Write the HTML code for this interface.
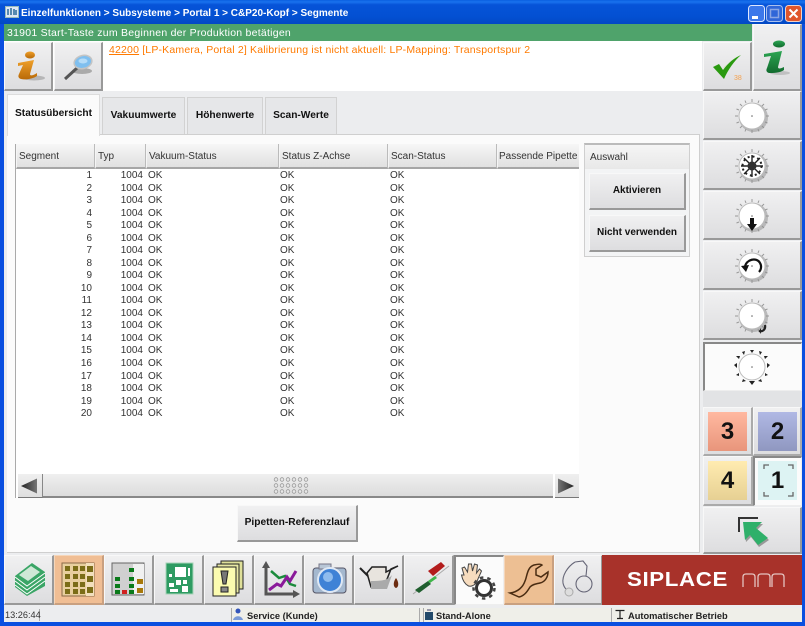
<!DOCTYPE html>
<html><head><meta charset="utf-8"><style>
*{box-sizing:border-box}
html,body{margin:0;padding:0;width:805px;height:626px;overflow:hidden;background:#ECEDEF}
body{font-family:"Liberation Sans",sans-serif;font-size:10px;color:#222}
#w{position:absolute;left:0;top:0;width:805px;height:626px;overflow:hidden;filter:blur(.3px);background:#ECEDEF}
.a{position:absolute}
.t{position:absolute;white-space:nowrap}
.btn{position:absolute;background:linear-gradient(#f0f0f1,#dddddf);border-top:1px solid #f8f8f8;border-left:1px solid #f8f8f8;border-right:2px solid #999;border-bottom:2px solid #999}
.act{background:#fbfbfb;border-top:2px solid #888;border-left:2px solid #888;border-right:1px solid #eee;border-bottom:1px solid #eee}
.org{background:#F0BE94;border-right:2px solid #c9a080;border-bottom:2px solid #c9a080;border-top:1px solid #f5d6ba;border-left:1px solid #f5d6ba}
.btn svg,.act svg{position:absolute;left:0;top:0}
.tab{position:absolute;background:#E6E7E9;border:1px solid #d2d2d2;border-bottom:none;top:97px;height:37px;font-weight:bold;text-align:center;line-height:35px;color:#111;font-size:10.200px}
.hd{position:absolute;top:144px;height:25px;background:linear-gradient(#f6f6f6,#e0e0e0);border-bottom:2px solid #a6a6a6;border-right:1px solid #bbb;border-left:1px solid #f5f5f5;line-height:26px;padding-left:2px;color:#333;white-space:nowrap;overflow:hidden;font-size:10px}
.col{position:absolute;top:170px;line-height:12.526px;color:#333;white-space:nowrap;font-size:10px}
.in{position:absolute;left:4px;top:4px;width:39px;height:39px;text-align:center;font-weight:bold;font-size:24px;line-height:39px;color:#111}
.c{border-right-color:#aaa;border-bottom-color:#aaa}
</style></head><body><div id="w">
<svg width="0" height="0" style="position:absolute"><defs>
<linearGradient id="og" x1="0" y1="0" x2="0" y2="1"><stop offset="0" stop-color="#EFA02A"/><stop offset="1" stop-color="#B96A08"/></linearGradient>
<linearGradient id="gg" x1="0" y1="0" x2="0" y2="1"><stop offset="0" stop-color="#2BA552"/><stop offset="1" stop-color="#126B2E"/></linearGradient>
<symbol id="knob" viewBox="0 0 98 48">
<g stroke="#999" stroke-width="1"><path d="M48 7v3M48 38v3M31 24h3M62 24h3M36 12l2 2M60 12l-2 2M36 36l2-2M60 36l-2-2M41 8.500l1 2.500M55 8.500l-1 2.500M41 39.500l1-2.500M55 39.500l-1-2.500M32.500 17l2.500 1M63.500 17l-2.500 1M32.500 31l2.500-1M63.500 31l-2.500-1"/></g>
<circle cx="49.500" cy="25.500" r="14.500" fill="#8d8d8d" opacity=".5"/>
<circle cx="48" cy="24" r="13" fill="#fff" stroke="#bbb"/><circle cx="48" cy="24" r=".8" fill="#666"/>
</symbol>
</defs></svg>

<!-- window frame -->
<div class="a" style="left:0;top:0;width:805px;height:24px;background:linear-gradient(#0a5fe0 0,#1a72ee 8%,#0653d8 20%,#0350d2 70%,#0348c4 100%)"></div>
<div class="a" style="left:0;top:24px;width:4px;height:602px;background:#0a4fe0"></div>
<div class="a" style="left:802px;top:24px;width:3px;height:602px;background:#0a4fe0"></div>
<div class="a" style="left:0;top:622px;width:805px;height:4px;background:#0a4fe0"></div>
<svg class="a" style="left:5px;top:6px" width="14" height="13"><rect x=".5" y=".5" width="13" height="11" fill="#dfe8f5" stroke="#9bb"/><path d="M3 3v6M6 2v7M9 3v6M11 4v5" stroke="#2a6a9a" stroke-width="1.500"/></svg>
<div class="t" style="left:21px;top:7px;color:#fff;font-weight:bold;font-size:10px;line-height:14px">Einzelfunktionen &gt; Subsysteme &gt; Portal 1 &gt; C&amp;P20-Kopf &gt; Segmente</div>
<svg class="a" style="left:748px;top:5px" width="54" height="18">
<rect x=".5" y=".5" width="16" height="16" rx="3" fill="#3c78ea" stroke="#dfe8ff"/><rect x="4" y="11" width="6" height="3" fill="#fff"/>
<rect x="18.500" y=".5" width="16" height="16" rx="3" fill="#2f66d8" stroke="#a9c0ee"/><rect x="22.500" y="4.500" width="8" height="8" fill="none" stroke="#8aa6e4" stroke-width="1.500"/>
<rect x="37.500" y=".5" width="16" height="16" rx="3" fill="#e0562c" stroke="#f3d0c4"/><path d="M41.500 4.500l8 8M49.500 4.500l-8 8" stroke="#fff" stroke-width="2"/>
</svg>

<!-- message bar -->
<div class="a" style="left:4px;top:24px;width:748px;height:17px;background:#4FA36B"></div>
<div class="t" style="left:7px;top:26px;color:#fff;font-size:10.500px;line-height:14px;letter-spacing:.25px">31901 Start-Taste zum Beginnen der Produktion betätigen</div>
<div class="a" style="left:4px;top:41px;width:698px;height:50px;background:#fff"></div>
<div class="t" style="left:109px;top:43px;color:#FF7A00;font-size:10.500px;line-height:14px;letter-spacing:.18px"><u>42200</u> [LP-Kamera, Portal 2] Kalibrierung ist nicht aktuell: LP-Mapping: Transportspur 2</div>

<div class="btn" style="left:4px;top:42px;width:49px;height:49px"><svg width="47" height="46"><ellipse cx="29" cy="35" rx="11" ry="2.500" fill="#999" opacity=".6"/><ellipse cx="25" cy="12" rx="5" ry="3.500" fill="url(#og)"/><path d="M13 20L29 17 25 31C25 33 27 33 32 30L32 33C28 36 20 37 16 36 13 35 13 33 14 31L18 22 13 23z" fill="url(#og)"/></svg></div>
<div class="btn" style="left:54px;top:42px;width:49px;height:49px"><svg width="47" height="46"><ellipse cx="27" cy="28" rx="10" ry="3" fill="#aaa"/><path d="M10 36l12-11" stroke="#555" stroke-width="3"/><ellipse cx="28" cy="19" rx="9" ry="6.500" fill="#7FBFEF" stroke="#c4c4c4" stroke-width="1.500" transform="rotate(-15 28 19)"/><ellipse cx="28" cy="18" rx="4.500" ry="2.500" fill="#b5dcf8"/></svg></div>

<div class="btn" style="left:703px;top:42px;width:49px;height:49px"><svg width="47" height="46"><path d="M9 24L15 21 19 27C24 20 30 15 37 12 30 18 24 27 20 36z" fill="#2A9A10"/><path d="M19 26C24 19 30 15 37 12 30 15 25 19 20 24z" fill="#cfe9a0"/><text x="30" y="37" font-size="7" fill="#F5A14E" font-family="Liberation Sans,sans-serif">38</text></svg></div>
<div class="btn" style="left:753px;top:24px;width:49px;height:67px"><svg width="47" height="64"><ellipse cx="26" cy="48" rx="10" ry="2" fill="#aaa" opacity=".6"/><ellipse cx="25" cy="19" rx="6" ry="3.500" fill="url(#gg)"/><path d="M10 29L28 26 24 42C24 44 26 44 30 42L30 45C26 48 19 48 15 48 12 47 12 45 13 43L17 31 10 32z" fill="url(#gg)"/></svg></div>

<!-- tabs + panel -->
<div class="a" style="left:7px;top:134px;width:693px;height:419px;background:#FBFBFB;border:1px solid #cfcfcf;border-left:none"></div>
<div class="a" style="left:7px;top:94px;width:93px;height:42px;background:#FBFBFB;border:1px solid #ddd;border-bottom:none;text-align:center;line-height:38px;color:#111;font-weight:bold;font-size:10.200px">Statusübersicht</div>
<div class="tab" style="left:102px;width:83px">Vakuumwerte</div>
<div class="tab" style="left:187px;width:76px">Höhenwerte</div>
<div class="tab" style="left:265px;width:72px">Scan-Werte</div>

<!-- table -->
<div class="a" style="left:15px;top:144px;width:564px;height:354px;background:#fff;border-left:1px solid #aaa"></div>
<div class="hd" style="left:16px;width:79px">Segment</div>
<div class="hd" style="left:95px;width:51px">Typ</div>
<div class="hd" style="left:146px;width:133px">Vakuum-Status</div>
<div class="hd" style="left:279px;width:109px">Status Z-Achse</div>
<div class="hd" style="left:388px;width:109px">Scan-Status</div>
<div class="hd" style="left:497px;width:82px;border-right:none;padding-left:1px">Passende Pipette</div>

<div class="col" style="left:40px;width:52px;text-align:right">1<br>2<br>3<br>4<br>5<br>6<br>7<br>8<br>9<br>10<br>11<br>12<br>13<br>14<br>15<br>16<br>17<br>18<br>19<br>20</div>
<div class="col" style="left:100px;width:43px;text-align:right">1004<br>1004<br>1004<br>1004<br>1004<br>1004<br>1004<br>1004<br>1004<br>1004<br>1004<br>1004<br>1004<br>1004<br>1004<br>1004<br>1004<br>1004<br>1004<br>1004</div>
<div class="col" style="left:148px">OK<br>OK<br>OK<br>OK<br>OK<br>OK<br>OK<br>OK<br>OK<br>OK<br>OK<br>OK<br>OK<br>OK<br>OK<br>OK<br>OK<br>OK<br>OK<br>OK</div>
<div class="col" style="left:280px">OK<br>OK<br>OK<br>OK<br>OK<br>OK<br>OK<br>OK<br>OK<br>OK<br>OK<br>OK<br>OK<br>OK<br>OK<br>OK<br>OK<br>OK<br>OK<br>OK</div>
<div class="col" style="left:390px">OK<br>OK<br>OK<br>OK<br>OK<br>OK<br>OK<br>OK<br>OK<br>OK<br>OK<br>OK<br>OK<br>OK<br>OK<br>OK<br>OK<br>OK<br>OK<br>OK</div>

<!-- scrollbar -->
<div class="a" style="left:18px;top:474px;width:25px;height:24px;background:linear-gradient(#efefef,#dedede);border-right:1px solid #888;border-bottom:1px solid #777"></div>
<svg class="a" style="left:20px;top:477px" width="18" height="18"><defs><linearGradient id="sa"><stop offset="0" stop-color="#222"/><stop offset="1" stop-color="#777"/></linearGradient><linearGradient id="sb"><stop offset="0" stop-color="#777"/><stop offset="1" stop-color="#222"/></linearGradient></defs><path d="M1 9L17 1.500v15z" fill="url(#sa)"/></svg>
<div class="a" style="left:43px;top:474px;width:510px;height:24px;background:linear-gradient(#efefef,#dcdcdc);border-bottom:2px solid #888"></div>
<div class="a" style="left:555px;top:474px;width:24px;height:24px;background:linear-gradient(#efefef,#dedede);border-bottom:1px solid #777"></div>
<svg class="a" style="left:557px;top:477px" width="18" height="18"><path d="M17 9L1 1.500v15z" fill="url(#sb)"/></svg>
<svg class="a" style="left:273px;top:477px" width="37" height="18"><g fill="#e8e8e8" stroke="#999" stroke-width=".8"><circle cx="3" cy="2.500" r="1.800"/><circle cx="9" cy="2.500" r="1.800"/><circle cx="15" cy="2.500" r="1.800"/><circle cx="21" cy="2.500" r="1.800"/><circle cx="27" cy="2.500" r="1.800"/><circle cx="33" cy="2.500" r="1.800"/><circle cx="3" cy="8.500" r="1.800"/><circle cx="9" cy="8.500" r="1.800"/><circle cx="15" cy="8.500" r="1.800"/><circle cx="21" cy="8.500" r="1.800"/><circle cx="27" cy="8.500" r="1.800"/><circle cx="33" cy="8.500" r="1.800"/><circle cx="3" cy="14.500" r="1.800"/><circle cx="9" cy="14.500" r="1.800"/><circle cx="15" cy="14.500" r="1.800"/><circle cx="21" cy="14.500" r="1.800"/><circle cx="27" cy="14.500" r="1.800"/><circle cx="33" cy="14.500" r="1.800"/></g></svg>

<div class="btn" style="left:237px;top:505px;width:121px;height:37px;text-align:center;line-height:33px;font-weight:bold;color:#111;font-size:10.200px">Pipetten-Referenzlauf</div>

<!-- Auswahl -->
<div class="a" style="left:584px;top:143px;width:106px;height:114px;background:#F3F4F5;border:1px solid #cfcfcf;border-top:2px solid #bbb"></div>
<div class="a" style="left:585px;top:145px;width:104px;height:24px;background:linear-gradient(#f5f5f5,#e8e8e8)"></div>
<div class="t" style="left:590px;top:151px;line-height:14px;color:#333">Auswahl</div>
<div class="btn" style="left:589px;top:173px;width:97px;height:37px;text-align:center;line-height:34px;font-weight:bold;color:#111">Aktivieren</div>
<div class="btn" style="left:589px;top:215px;width:97px;height:37px;text-align:center;line-height:34px;color:#111;font-weight:bold;font-size:10px">Nicht verwenden</div>

<!-- right column -->
<div class="a" style="left:703px;top:391px;width:99px;height:16px;background:#e2e3e5"></div>
<div class="btn" style="left:703px;top:91px;width:99px;height:49px"><svg width="98" height="48"><use href="#knob"/></svg></div>
<div class="btn" style="left:703px;top:141px;width:99px;height:49px"><svg width="98" height="48"><use href="#knob"/><g stroke="#222" stroke-width="1.400"><path d="M48 13v22M37 24h22M40 16l16 16M56 16l-16 16"/></g><circle cx="48" cy="24" r="4.500" fill="#333"/><circle cx="48" cy="24" r="9.500" fill="none" stroke="#222" stroke-width="2" stroke-dasharray="2 3"/></svg></div>
<div class="btn" style="left:703px;top:191px;width:99px;height:49px"><svg width="98" height="48"><use href="#knob"/><path d="M46 26h4v6h3l-5 7-5-7h3z" fill="#111"/></svg></div>
<div class="btn" style="left:703px;top:241px;width:99px;height:49px"><svg width="98" height="48"><use href="#knob"/><path d="M41 25c1-8 12-10 15-4 2 3 1 7-1 9" fill="none" stroke="#111" stroke-width="2.200"/><path d="M37 24l8-1-3 7z" fill="#111"/></svg></div>
<div class="btn" style="left:703px;top:291px;width:99px;height:49px"><svg width="98" height="48"><use href="#knob"/><path d="M61 33c1 5-3 7-6 6" fill="none" stroke="#222" stroke-width="2.200"/><path d="M57 36l-2 3 2 3z" fill="#222"/></svg></div>
<div class="act" style="position:absolute;left:703px;top:342px;width:99px;height:49px"><svg width="97" height="47"><circle cx="47" cy="23" r="13" fill="#fff" stroke="#bbb"/><circle cx="47" cy="23" r=".8" fill="#666"/><g fill="#222"><path d="M45 6h4l-2 3zM54 7l3 1-2 3zM40 7l-3 1 2 3zM31 12l4 0-1 3zM63 12l-4 0 1 3zM29 21l3-2v5zM65 21l-3-2v5zM31 31l3-2 0 3zM63 31l-3-2 0 3zM37 38l1-3 3 2zM57 38l-1-3-3 2zM47 41l-3-4h6z"/></g></svg></div>

<div class="btn c" style="left:703px;top:407px;width:50px;height:49px"><div class="in" style="background:linear-gradient(#FFB8A0,#E8957B)">3</div></div>
<div class="btn c" style="left:753px;top:407px;width:49px;height:49px"><div class="in" style="background:linear-gradient(#B0B8E4,#8F97C0)">2</div></div>
<div class="btn c" style="left:703px;top:456px;width:50px;height:50px"><div class="in" style="background:linear-gradient(#FFEBB0,#E6D093)">4</div></div>
<div class="act" style="position:absolute;left:753px;top:456px;width:49px;height:50px"><div class="in" style="left:3px;top:3px;background:#DDF3F3">1</div><svg width="47" height="47"><path d="M9 11V7h5M33 7h5v4M9 34v4h5M33 38h5v-4" fill="none" stroke="#666" stroke-width="1.300"/></svg></div>
<div class="btn" style="left:703px;top:507px;width:99px;height:47px"><svg width="98" height="44"><path d="M35 24V10h19" fill="none" stroke="#333" stroke-width="2"/><path d="M40 16L59 16 53 22 65 32 55 39 47 29 42 34z" fill="#999"/><path d="M39 14L58 14 52 20 64 30 54 37 46 27 41 32z" fill="#2FB06A"/></svg></div>

<!-- bottom bar -->
<div class="btn" style="left:4px;top:555px;width:50px;height:50px"><svg width="48" height="48"><path d="M10 20l17-13 13 9v14L22 40 10 31z" fill="#3aa566"/><path d="M10 21l12 9 18-13M10 25l12 9 18-13M10 29l12 9 18-13" stroke="#fff" fill="none"/><path d="M14 19l12-9 9 6-12 9z" fill="#cfe8d6"/></svg></div>
<div class="btn org" style="left:54px;top:555px;width:50px;height:50px"><svg width="48" height="48"><rect x="7" y="7" width="32" height="33" fill="#E8CF9F" stroke="#8a6a48"/><rect x="31" y="7" width="8" height="33" fill="#f2dfbd"/><g fill="#7b6d18"><rect x="10" y="10" width="5" height="5"/><rect x="18" y="10" width="5" height="5"/><rect x="25" y="10" width="5" height="5"/><rect x="10" y="18" width="5" height="5"/><rect x="18" y="18" width="5" height="5"/><rect x="25" y="18" width="5" height="5"/><rect x="10" y="26" width="5" height="5"/><rect x="18" y="26" width="5" height="5"/><rect x="25" y="26" width="5" height="5"/><rect x="10" y="33" width="5" height="5"/><rect x="18" y="33" width="5" height="5"/><rect x="25" y="33" width="5" height="5"/><rect x="32" y="10" width="6" height="6"/><rect x="32" y="20" width="6" height="6"/><rect x="32" y="31" width="6" height="6"/></g></svg></div>
<div class="btn" style="left:104px;top:555px;width:50px;height:50px"><svg width="48" height="48"><rect x="7" y="7" width="32" height="32" fill="#d0d0d0" stroke="#666"/><rect x="28" y="8" width="11" height="30" fill="#f1f1f1"/><g fill="#0a7a1a"><rect x="10" y="21" width="5" height="4"/><rect x="10" y="28" width="5" height="4"/><rect x="10" y="34" width="5" height="4"/><rect x="24" y="12" width="5" height="4"/><rect x="24" y="21" width="5" height="4"/><rect x="24" y="28" width="5" height="4"/><rect x="24" y="34" width="5" height="4"/></g><rect x="17" y="34" width="5" height="4" fill="#d02020"/><rect x="32" y="23" width="6" height="5" fill="#a8780a"/><rect x="32" y="32" width="6" height="5" fill="#a8780a"/></svg></div>
<div class="btn" style="left:154px;top:555px;width:50px;height:50px"><svg width="48" height="48"><rect x="11" y="7" width="27" height="31" fill="#2E9B62" stroke="#a7d4b8"/><rect x="20" y="11" width="11" height="10" fill="#fff"/><g fill="#fff"><rect x="21" y="24" width="5" height="5"/><rect x="28" y="24" width="4" height="4"/><rect x="14" y="27" width="5" height="4"/><rect x="15" y="33" width="8" height="3"/><rect x="27" y="30" width="6" height="6"/><rect x="14" y="18" width="3" height="3"/><rect x="33" y="12" width="2" height="8"/></g></svg></div>
<div class="btn" style="left:204px;top:555px;width:50px;height:50px"><svg width="48" height="48"><rect x="16" y="5" width="22" height="28" fill="#dfe09a" stroke="#222"/><rect x="12" y="8" width="22" height="29" fill="#e8e8a4" stroke="#222"/><rect x="8" y="11" width="23" height="29" fill="#FBFBB0" stroke="#222"/><path d="M16 15h7l-2 13h-3z" fill="#777" stroke="#222"/><rect x="16" y="31" width="7" height="5" fill="#888" stroke="#222"/></svg></div>
<div class="btn" style="left:254px;top:555px;width:50px;height:50px"><svg width="48" height="48"><path d="M11 10v28h30" fill="none" stroke="#555" stroke-width="3"/><path d="M7 12l4-7 4 7zM38 34l7 4-7 4z" fill="#555"/><path d="M16 15l8 7 6-2 5 8 6 2" fill="none" stroke="#1B8B3C" stroke-width="2.500"/><path d="M14 34l8-6 4 2 6-9 3 4 6-10" fill="none" stroke="#8A1A9A" stroke-width="3"/></svg></div>
<div class="btn" style="left:304px;top:555px;width:50px;height:50px"><svg width="48" height="48"><rect x="8" y="12" width="33" height="25" rx="3" fill="#a4b8cf" stroke="#556"/><rect x="14" y="8" width="12" height="5" fill="#b8c6d6" stroke="#778"/><circle cx="25" cy="24" r="12" fill="#3F82D6" stroke="#dfe8f4" stroke-width="2"/><circle cx="23" cy="21" r="5" fill="#8fbcee"/></svg></div>
<div class="btn" style="left:354px;top:555px;width:50px;height:50px"><svg width="48" height="48"><path d="M12 17l5-6h14v5l12-6-7 3-7 18H16z" fill="#e8e4de" stroke="#222" stroke-width="1.500"/><path d="M16 33h16l5-14c-5 6-12 6-21 6z" fill="#aaa"/><path d="M5 12l8 8" stroke="#222" stroke-width="2"/><path d="M41 22c3 4 3 9 0 10-3-1-3-6 0-10z" fill="#6b2b10"/></svg></div>
<div class="btn" style="left:404px;top:555px;width:50px;height:50px"><svg width="48" height="48"><path d="M8 38L44 10" stroke="#aaa" stroke-width="1"/><path d="M23 15L36 6l4 4-12 10z" fill="#B31C1C"/><path d="M14 37l12-9-3-3-13 9z" fill="#1F5E2E"/><path d="M23 25l7-5 2 2-7 5z" fill="#3FB64A"/></svg></div>
<div class="act" style="position:absolute;left:454px;top:555px;width:50px;height:50px"><svg width="48" height="48"><path d="M8 18L6 11l2.500-1 3 5 1-8 3 0 1 7 2-7 3 1-1 8 3-4 2 2-4 9c-1 4-5 7-9 6-4-2-6-6-7-11z" fill="#F7DCBE" stroke="#444"/><circle cx="28" cy="31" r="7.500" fill="#fff" stroke="#333" stroke-width="3"/><circle cx="28" cy="31" r="10.500" fill="none" stroke="#444" stroke-width="2.500" stroke-dasharray="3.500 4"/></svg></div>
<div class="btn org" style="left:504px;top:555px;width:50px;height:50px;background:#EDBF93"><svg width="48" height="48"><path d="M5 37c8-1 13-6 15-12 2-4 2-14 9-16 4-1 7-1 8 0l-6 4v6l5 2 7-5c0 5-3 10-8 11-4 1-7 1-10 4-3 5-6 9-11 10z" fill="#EAB689" stroke="#4a2c12" stroke-width="1.500"/></svg></div>
<div class="btn" style="left:554px;top:555px;width:49px;height:50px"><svg width="47" height="48"><g fill="none" stroke="#667" stroke-width="1.100"><path d="M20 6C12 11 7 20 8 27c1 5 4 8 8 8"/><circle cx="29" cy="28" r="8"/><path d="M20 6l8-1 4 5-1 10"/></g><circle cx="14" cy="36" r="4" fill="#ddd" stroke="#aaa"/></svg></div>
<div class="a" style="left:602px;top:555px;width:200px;height:50px;background:#A8322A"></div>
<div class="t" style="left:627px;top:568px;color:#fff;font-weight:bold;font-size:20px;line-height:24px;letter-spacing:.55px;transform:scaleX(1.115);transform-origin:left">SIPLACE</div>
<svg class="a" style="left:742px;top:572px" width="44" height="16"><path d="M1 15V5q0-3 3-3h6q3 0 3 3v10M16 15V5q0-3 3-3h6q3 0 3 3v10M30 15V5q0-3 3-3h6q3 0 3 3v10" fill="none" stroke="#e4c4c0" stroke-width="1.300"/></svg>

<!-- status bar -->
<div class="a" style="left:4px;top:605px;width:798px;height:17px;background:#ECEDEF"></div>
<div class="a" style="left:231px;top:608px;width:571px;height:14px;background:#EFEFE9"></div>
<div class="a" style="left:39px;top:609px;width:1px;height:12px;background:#aaa"></div>
<div class="t" style="left:5px;top:609px;font-size:9.200px;line-height:12px;color:#333">13:26:44</div>
<div class="a" style="left:231px;top:608px;width:1px;height:14px;background:#aaa"></div>
<svg class="a" style="left:232px;top:607px" width="14" height="15"><circle cx="6" cy="4" r="2.500" fill="#3355bb"/><path d="M1 13c1-5 9-5 10 0z" fill="#7a9ad8"/></svg>
<div class="t" style="left:247px;top:610px;color:#222;font-size:9.300px;line-height:13px;font-weight:bold">Service (Kunde)</div>
<div class="a" style="left:419px;top:608px;width:1px;height:14px;background:#aaa"></div>
<div class="a" style="left:423px;top:608px;width:1px;height:14px;background:#aaa"></div>
<svg class="a" style="left:424px;top:608px" width="10" height="13"><rect x="1" y="4" width="8" height="8" fill="#234a6a"/><rect x="3" y="1" width="4" height="2" fill="#99a"/></svg>
<div class="t" style="left:436px;top:610px;color:#222;font-size:9.300px;line-height:13px;font-weight:bold">Stand-Alone</div>
<div class="a" style="left:611px;top:608px;width:1px;height:14px;background:#aaa"></div>
<svg class="a" style="left:615px;top:609px" width="11" height="11"><path d="M.5 1.500h9M5 1.500v8M2 9.500h6" stroke="#222" stroke-width="1.200" fill="none"/></svg>
<div class="t" style="left:628px;top:610px;color:#222;font-size:9.300px;line-height:13px;font-weight:bold">Automatischer Betrieb</div>
</div></body></html>
